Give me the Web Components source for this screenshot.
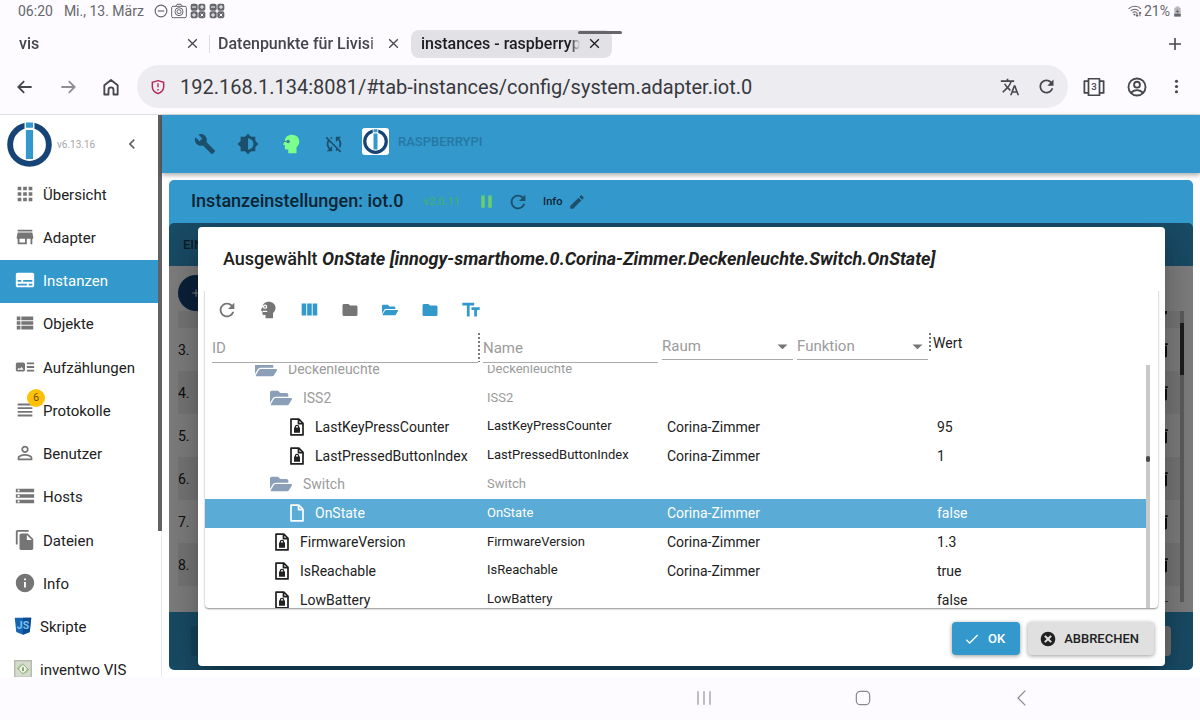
<!DOCTYPE html>
<html lang="de">
<head>
<meta charset="utf-8">
<title>instances - raspberrypi</title>
<style>
    :root {
        --chrome-bg: #fdfbff;
        --chrome-fg: #45474d;
        --primary: #3399cc;
        --primary-dark: #164477;
        --text: #212121;
        --muted: #9b9b9b;
        --icon: #757575;
    }

    html,
    body {
        height: 100%;
    }

    body {
        margin: 0;
        display: flex;
        flex-direction: column;
        overflow: hidden;
        background: var(--chrome-bg);
        color: var(--text);
        font-family: Roboto, "Liberation Sans", sans-serif;
        font-size: 14px;
    }

    .page {
        flex: 1;
        min-height: 0;
        display: flex;
        background: #fff;
        border-top: 1px solid #dedde2;
        box-sizing: border-box;
    }

    main {
        flex: 1;
        min-width: 0;
        display: flex;
        flex-direction: column;
        gap: 7px;
    }
</style>
</head>
<body>

<status-bar></status-bar>
<tab-strip>
    <browser-tab>vis</browser-tab>
    <browser-tab divider>Datenpunkte für Livisi</browser-tab>
    <browser-tab active>instances - raspberrypi</browser-tab>
</tab-strip>
<address-bar url="192.168.1.134:8081/#tab-instances/config/system.adapter.iot.0"></address-bar>

<div class="page">
    <side-nav version="v6.13.16">
        <nav-item icon="apps">Übersicht</nav-item>
        <nav-item icon="store">Adapter</nav-item>
        <nav-item icon="subtitles" selected>Instanzen</nav-item>
        <nav-item icon="list">Objekte</nav-item>
        <nav-item icon="art">Aufzählungen</nav-item>
        <nav-item icon="headline" badge="6">Protokolle</nav-item>
        <nav-item icon="person">Benutzer</nav-item>
        <nav-item icon="storage">Hosts</nav-item>
        <nav-item icon="copy">Dateien</nav-item>
        <nav-item icon="info">Info</nav-item>
        <nav-item icon="js" image>Skripte</nav-item>
        <nav-item icon="inventwo" image>inventwo VIS</nav-item>
    </side-nav>
    <main>
        <admin-header>RASPBERRYPI</admin-header>
        <instance-panel name="iot.0" version="v2.0.11">
            <select-dialog state="OnState" path="innogy-smarthome.0.Corina-Zimmer.Deckenleuchte.Switch.OnState">
                <tree-row level="0" kind="folder" name="Deckenleuchte"></tree-row>
                <tree-row level="1" kind="folder" name="ISS2"></tree-row>
                <tree-row level="2" kind="locked" name="LastKeyPressCounter" room="Corina-Zimmer" value="95"></tree-row>
                <tree-row level="2" kind="locked" name="LastPressedButtonIndex" room="Corina-Zimmer" value="1"></tree-row>
                <tree-row level="1" kind="folder" name="Switch"></tree-row>
                <tree-row level="2" kind="file" name="OnState" room="Corina-Zimmer" value="false" selected></tree-row>
                <tree-row level="1" kind="locked" name="FirmwareVersion" room="Corina-Zimmer" value="1.3"></tree-row>
                <tree-row level="1" kind="locked" name="IsReachable" room="Corina-Zimmer" value="true"></tree-row>
                <tree-row level="1" kind="locked" name="LowBattery" value="false"></tree-row>
            </select-dialog>
        </instance-panel>
    </main>
</div>

<system-nav></system-nav>

<script type="module">
    const HEAD = '<path fill-rule="evenodd" d="M13 2C8.6 2 5.6 4.500 5.300 8.400L3.500 12.200c-.2.5 0 .8.500.8H5.300v3.500c0 1 .7 1.500 1.500 1.500H9v4h9v-6.500c1.900-1.600 3-3.900 3-6.300C21 5 17.500 2 13 2z"/>';

    // markup on a 24 grid, or [viewBox, markup]
    const ICONS = {
        wrench: '<path d="M22.700 19l-9.100-9.100c.9-2.300.4-5-1.500-6.900-2-2-5-2.400-7.400-1.300L9 6 6 9 1.600 4.700C.4 7.100.9 10.100 2.900 12.100c1.900 1.900 4.600 2.400 6.900 1.500l9.100 9.100c.4.4 1 .4 1.400 0l2.300-2.300c.5-.4.5-1.100.1-1.400z"/>',
        brightness: '<path d="M20 15.310L23.310 12 20 8.690V4h-4.690L12 .69 8.690 4H4v4.690L.69 12 4 15.310V20h4.690L12 23.310 15.310 20H20v-4.690zM12 18V6c3.310 0 6 2.690 6 6s-2.690 6-6 6z"/>',
        syncOff: '<path d="M10 6.350V4.260c-.8.21-1.550.54-2.230.96l1.460 1.460c.25-.12.5-.24.77-.33zm-7.140-.94l2.360 2.360C4.450 8.990 4 10.440 4 12c0 2.210.91 4.200 2.360 5.640L4 20h6v-6l-2.240 2.240C6.680 15.150 6 13.660 6 12c0-1 .25-1.940.68-2.770l8.080 8.080c-.25.13-.5.25-.77.34v2.090c.8-.21 1.550-.54 2.230-.96l2.360 2.360 1.270-1.270L4.140 4.140 2.860 5.410zM20 4h-6v6l2.240-2.240C17.320 8.850 18 10.340 18 12c0 1-.25 1.940-.68 2.770l1.460 1.460C19.550 15.010 20 13.560 20 12c0-2.210-.91-4.200-2.360-5.640L20 4z"/>',
        head: HEAD + '<circle cx="8.800" cy="9.200" r="1.900" fill="#3a7d9c"/><path stroke="#3a7d9c" stroke-width="1" d="M3 9.200h4"/>',
        expert: HEAD + '<circle cx="8.500" cy="8" r="2.600" fill="#fff"/><circle cx="8.500" cy="8" r="1.100"/><path stroke="#fff" stroke-width="1.500" d="M3 8h4M6 13.500h5"/>',
        refresh: '<path d="M17.650 6.350C16.200 4.900 14.210 4 12 4c-4.420 0-7.990 3.580-7.990 8s3.570 8 7.990 8c3.730 0 6.840-2.550 7.730-6h-2.080c-.82 2.330-3.040 4-5.650 4-3.310 0-6-2.690-6-6s2.690-6 6-6c1.660 0 3.140.69 4.220 1.780L13 11h7V4l-2.350 2.350z"/>',
        pause: '<path d="M6 19h4V5H6v14zm8-14v14h4V5h-4z"/>',
        edit: '<path d="M3 17.250V21h3.750L17.810 9.940l-3.750-3.750L3 17.250zM20.710 7.040c.39-.39.39-1.020 0-1.410l-2.340-2.340c-.39-.39-1.020-.39-1.410 0l-1.830 1.830 3.750 3.750 1.830-1.830z"/>',
        apps: '<path d="M4 8h4V4H4v4zm6 12h4v-4h-4v4zm-6 0h4v-4H4v4zm0-6h4v-4H4v4zm6 0h4v-4h-4v4zm6-10v4h4V4h-4zm-6 4h4V4h-4v4zm6 6h4v-4h-4v4zm0 6h4v-4h-4v4z"/>',
        store: '<path d="M20 4H4v2h16V4zm1 10v-2l-1-5H4l-1 5v2h1v6h10v-6h4v6h2v-6h1zm-9 4H6v-4h6v4z"/>',
        subtitles: '<path d="M20 4H4c-1.100 0-2 .9-2 2v12c0 1.100.9 2 2 2h16c1.100 0 2-.9 2-2V6c0-1.100-.9-2-2-2zM4 12h4v2H4v-2zm10 6H4v-2h10v2zm6 0h-4v-2h4v2zm0-4H10v-2h10v2z"/>',
        list: '<path d="M3 14h4v-4H3v4zm0 5h4v-4H3v4zM3 9h4V5H3v4zm5 5h13v-4H8v4zm0 5h13v-4H8v4zM8 5v4h13V5H8z"/>',
        art: '<path d="M22 13h-8v-2h8v2zm0-6h-8v2h8V7zm-8 10h8v-2h-8v2zm-2-8v6c0 1.100-.9 2-2 2H4c-1.100 0-2-.9-2-2V9c0-1.100.9-2 2-2h6c1.100 0 2 .9 2 2zm-1.500 6l-2.250-3-1.750 2.260-1.250-1.510L3.500 15h7z"/>',
        headline: '<path d="M4 15h16v-2H4v2zm0 4h16v-2H4v2zm0-8h16V9H4v2zm0-6v2h16V5H4z"/>',
        person: '<path d="M12 5.900c1.160 0 2.100.94 2.100 2.100s-.94 2.100-2.100 2.100S9.900 9.160 9.900 8s.94-2.100 2.100-2.100m0 9c2.970 0 6.100 1.460 6.100 2.100v1.100H5.900V17c0-.64 3.130-2.100 6.100-2.100M12 4C9.790 4 8 5.790 8 8s1.790 4 4 4 4-1.790 4-4-1.790-4-4-4zm0 9c-2.670 0-8 1.340-8 4v3h16v-3c0-2.660-5.330-4-8-4z"/>',
        storage: '<path d="M2 20h20v-4H2v4zm2-3h2v2H4v-2zM2 4v4h20V4H2zm4 3H4V5h2v2zm-4 7h20v-4H2v4zm2-3h2v2H4v-2z"/>',
        copy: '<path d="M16 1H4c-1.100 0-2 .9-2 2v14h2V3h12V1zm-1 4l6 6v10c0 1.100-.9 2-2 2H7.990C6.890 23 6 22.100 6 21l.01-14c0-1.100.89-2 1.990-2h7zm-1 7h5.500L14 6.500V12z"/>',
        info: '<path d="M12 2C6.480 2 2 6.480 2 12s4.480 10 10 10 10-4.480 10-10S17.520 2 12 2zm1 15h-2v-6h2v6zm0-8h-2V7h2v2z"/>',
        columns: '<path d="M10 18h5V5h-5v13zm-6 0h5V5H4v13zM16 5v13h5V5h-5z"/>',
        folder: '<path d="M10 4H4c-1.100 0-1.990.9-1.990 2L2 18c0 1.100.9 2 2 2h16c1.100 0 2-.9 2-2V8c0-1.100-.9-2-2-2h-8l-2-2z"/>',
        folderOpen: ["0 0 576 512", '<path d="M572.694 292.093L500.270 416.248A64 64 0 0 1 444.989 448H45.025c-18.523 0-30.064-20.093-20.731-36.093l72.424-124.155A64 64 0 0 1 152 256h399.964c18.523 0 30.064 20.093 20.730 36.093zM152 224h328v-48c0-26.510-21.490-48-48-48H272l-64-64H48C21.490 64 0 85.490 0 112v278.046l69.077-118.418C86.214 242.250 117.989 224 152 224z"/>'],
        textSize: '<path d="M2.500 4v3h5v12h3V7h5V4h-13zm19 5h-9v3h3v7h3v-7h3V9z"/>',
        file: '<path fill="none" stroke="currentColor" stroke-width="2.200" stroke-linejoin="round" d="M4 1.500h10.500L20 7v15.500H4zM14 2v5.500h5.500"/>',
        locked: '<path fill="none" stroke="currentColor" stroke-width="2.300" stroke-linejoin="round" d="M4 1.500h10.500L20 7v15.500H4zM14 2v5.500h5.500"/><path fill-rule="evenodd" d="M8 12.700h1V12a3 3 0 0 1 6 0v.7h1v6.800H8zM10.600 12.700h2.800V12a1.400 1.400 0 0 0-2.800 0z"/>',
        check: '<path fill="none" stroke="currentColor" stroke-width="2" d="M3.500 13l5 5L20.500 6"/>',
        cancel: '<path fill-rule="evenodd" d="M12 1a11 11 0 1 0 0 22 11 11 0 0 0 0-22zM8.300 6.200L12 9.900l3.700-3.700 2.100 2.100L14.100 12l3.700 3.700-2.100 2.100L12 14.100l-3.700 3.700-2.100-2.100L9.900 12 6.200 8.300z"/>',
        trash: '<path d="M6 19c0 1.100.9 2 2 2h8c1.100 0 2-.9 2-2V7H6v12zM19 4h-3.500l-1-1h-5l-1 1H5v2h14V4z"/>',
        chevron: '<path d="M15.410 7.410L14 6l-6 6 6 6 1.410-1.410L10.830 12z"/>',
        caret: '<path d="M5 9l7 7 7-7z"/>',
        close: '<path fill="none" stroke="currentColor" stroke-width="2.400" d="M4 4l16 16M20 4L4 20"/>',
        plus: '<path fill="none" stroke="currentColor" stroke-width="2.400" d="M12 3v18M3 12h18"/>',
        back: '<path fill="none" stroke="currentColor" stroke-width="2.200" d="M20 12H4M11 5l-7 7 7 7"/>',
        forward: '<path fill="none" stroke="currentColor" stroke-width="2.200" d="M4 12h16M13 5l7 7-7 7"/>',
        home: '<path fill="none" stroke="currentColor" stroke-width="2.200" stroke-linejoin="round" d="M4 10l8-6.500L20 10v11h-5v-5.500a3 3 0 0 0-6 0V21H4z"/>',
        shield: '<path fill="none" stroke="#b3265b" stroke-width="2.200" d="M12 2.500L20.500 5v7c0 5-3.500 8-8.500 10-5-2-8.500-5-8.500-10V5z"/><path stroke="#b3265b" stroke-width="2" d="M12 6.500v6M12 15v2.200"/>',
        translate: '<path d="M12.870 15.070l-2.540-2.510.03-.03c1.740-1.940 2.980-4.170 3.710-6.530H17V4h-7V2H8v2H1v1.990h11.170C11.500 7.920 10.440 9.750 9 11.350 8.070 10.320 7.300 9.190 6.690 8h-2c.73 1.630 1.730 3.170 2.980 4.560l-5.090 5.020L4 19l5-5 3.110 3.110.76-2.040zM18.500 10h-2L12 22h2l1.120-3h4.750L21 22h2l-4.500-12zm-2.620 7l1.620-4.330L19.120 17h-3.240z"/>',
        tabs: '<path fill="none" stroke="currentColor" stroke-width="1.900" stroke-linejoin="round" d="M6 3h12v18H6zM6 5.500H1.500v13H6M18 5.500h4.500v13H18"/><text x="12" y="15.800" font-size="10.500" font-weight="500" text-anchor="middle">3</text>',
        account: '<g fill="none" stroke="currentColor" stroke-width="2"><circle cx="12" cy="12" r="9.300"/><circle cx="12" cy="9.500" r="3.200"/><path d="M5.500 18.500c3.500-4.200 9.500-4.200 13 0"/></g>',
        more: '<circle cx="12" cy="4.500" r="2.200"/><circle cx="12" cy="12" r="2.200"/><circle cx="12" cy="19.500" r="2.200"/>',
        dnd: '<g fill="none" stroke="currentColor" stroke-width="2"><circle cx="12" cy="12" r="10"/><path d="M6.500 12h11"/></g>',
        camera: '<g fill="none" stroke="currentColor" stroke-width="1.500"><rect x="1" y="5" width="22" height="17" rx="2"/><path d="M7 5l2-3h6l2 3"/><circle cx="12" cy="13" r="6"/><circle cx="12" cy="13" r="3"/></g>',
        calc: '<g><rect x="1" y="1" width="10.500" height="10.500" rx="3"/><rect x="12.500" y="1" width="10.500" height="10.500" rx="3"/><rect x="1" y="12.500" width="10.500" height="10.500" rx="3"/><rect x="12.500" y="12.500" width="10.500" height="10.500" rx="3"/></g><path stroke="#fdfbff" stroke-width="1.500" d="M3 6h6M18 3v6M15 6h6M6 15v6M3 18h6M16 16l4 4M20 16l-4 4"/>',
        wifi: '<g fill="none" stroke="currentColor" stroke-width="1.800"><path d="M1 8.500c6-6 16-6 21 0M4.500 12c4-4 10-4 14 0M8 15c2-2 5-2 7 0"/><path d="M15.500 15v6M13.500 19l2 2 2-2M20.500 21v-7M18.500 16l2-2 2 2"/></g><circle cx="11" cy="18" r="1.700"/>',
        battery: '<path d="M8 1h8v3h3v19H5V4h3z" opacity=".45"/><path d="M5 17h14v6H5zM13 6l-5 7h4l-1 5 5-7h-4z"/>',
        logo: ["0 0 100 100", '<circle cx="50" cy="50" r="43" fill="#fff" stroke="#164477" stroke-width="13"/><path fill="#fff" d="M39 0h22v20H39z"/><path fill="#3399cc" d="M42 1h16v12H42zM42 18h16v64H42z"/>'],
        js: '<path fill="#1565b0" d="M1 1h22l-2 19-9 3.500L3 20z"/><path fill="#0b4c96" d="M12 1h11l-2 19-9 3.500z"/><text x="12" y="16.500" font-size="14" font-weight="700" text-anchor="middle" fill="#7cc0ee">JS</text>',
        inventwo: '<rect width="24" height="24" fill="#b6bdb0"/><rect x="2" y="2" width="20" height="20" fill="#d5dccf"/><path fill="none" stroke="#8fb573" stroke-width="1.200" d="M12 5l6.500 7-6.500 7-6.500-7zM4 12l5-6M20 12l-5 6"/><circle cx="12" cy="12" r="4" fill="#f0f5ea"/><path stroke="#567a3c" stroke-width="1.800" d="M12 9.500v5"/>',
        recents: '<path fill="none" stroke="currentColor" stroke-width="1.600" d="M3 2v20M12 2v20M21 2v20"/>',
        homeKey: '<rect x="2" y="2" width="20" height="20" rx="6" fill="none" stroke="currentColor" stroke-width="1.800"/>',
        backKey: '<path fill="none" stroke="currentColor" stroke-width="1.800" d="M17 1L6 12l11 11"/>',
    };

    const RESET = `
        *, *::before, *::after { box-sizing: border-box; }
        :host { box-sizing: border-box; }
        button, a, input, select {
            margin: 0; padding: 0; border: 0; background: none;
            font: inherit; color: inherit; text-decoration: none; outline: 0;
        }
        button { display: flex; align-items: center; justify-content: center; cursor: pointer; }
    `;

    const define = (name, render) =>
        customElements.define(name, class extends HTMLElement {
            constructor() {
                super();
                this.attachShadow({ mode: "open" });
            }
            connectedCallback() {
                const tpl = document.createElement("template");
                tpl.innerHTML = `<style>${RESET}</style>` + render(this);
                this.shadowRoot.replaceChildren(tpl.content.cloneNode(true));
            }
        });

    define("ob-icon", (el) => {
        const icon = ICONS[el.getAttribute("name")];
        const [box, body] = Array.isArray(icon) ? icon : ["0 0 24 24", icon];
        const size = el.getAttribute("size") || 22;
        return `
            <style>
                :host { display: inline-flex; flex: none; width: ${size}px; height: ${size}px; }
                svg { width: 100%; height: 100%; display: block; overflow: visible; }
            </style>
            <svg viewBox="${box}" fill="currentColor" aria-hidden="true">${body}</svg>`;
    });

    define("status-bar", () => `
        <style>
            :host { display: flex; align-items: center; justify-content: space-between; height: 22px; padding: 0 17px 0 18px; color: #66676c; }
            .group { display: flex; align-items: center; gap: 3px; }
            .date { margin: 0 7px 0 8px; }
            .right { gap: 2px; }
        </style>
        <div class="group">
            <span>06:20</span><span class="date">Mi., 13. März</span>
            <ob-icon name="dnd" size="14"></ob-icon>
            <ob-icon name="camera" size="16"></ob-icon>
            <ob-icon name="calc" size="16"></ob-icon>
            <ob-icon name="calc" size="16"></ob-icon>
        </div>
        <div class="group right">
            <ob-icon name="wifi" size="14"></ob-icon>
            <span>21%</span>
            <ob-icon name="battery" size="11"></ob-icon>
        </div>`);

    define("tab-strip", () => `
        <style>
            :host { position: relative; display: flex; align-items: center; height: 43px; padding: 0 17px 0 9px; color: var(--chrome-fg); }
            .add { margin-left: auto; }
            .handle { position: absolute; left: 50%; top: 9px; width: 44px; height: 3px; margin-left: -22px; border-radius: 2px; background: #66656a; }
        </style>
        <slot></slot>
        <button class="add" aria-label="Neuer Tab"><ob-icon name="plus" size="16"></ob-icon></button>
        <div class="handle"></div>`);

    define("browser-tab", () => `
        <style>
            :host { display: flex; align-items: center; width: 201px; height: 28px; padding: 0 11px 0 10px; gap: 8px; }
            :host([active]) { background: #e2e1e6; border-radius: 8px; color: #1d1d21; }
            :host([divider])::before { content: ""; width: 1px; height: 18px; margin: 0 0 0 -11px; background: #dcdbe1; }
            .title {
                flex: 1; overflow: hidden; white-space: nowrap; justify-content: flex-start;
                font-size: 16px; font-weight: 500;
                mask-image: linear-gradient(90deg, #000 calc(100% - 10px), transparent);
            }
        </style>
        <button class="title" role="tab"><slot></slot></button>
        <button aria-label="Tab schließen"><ob-icon name="close" size="13"></ob-icon></button>`);

    define("address-bar", (el) => `
        <style>
            :host { display: flex; align-items: center; padding: 0 17px 6px 15px; color: var(--chrome-fg); }
            .nav { display: flex; gap: 23px; margin-right: 16px; }
            .forward { color: #8e8f95; }
            form { flex: 1; display: flex; align-items: center; height: 43px; padding: 0 11px 0 13px; border-radius: 22px; background: #edecf1; }
            input { flex: 1; min-width: 0; margin-left: 14px; font-size: 20px; color: #37393e; }
            form button + button { margin-left: 16px; }
            .tools { display: flex; gap: 21px; margin-left: 15px; }
            .menu { width: 14px; }
        </style>
        <div class="nav">
            <button aria-label="Zurück"><ob-icon name="back" size="20"></ob-icon></button>
            <button class="forward" aria-label="Vorwärts"><ob-icon name="forward" size="20"></ob-icon></button>
            <button aria-label="Startseite"><ob-icon name="home" size="20"></ob-icon></button>
        </div>
        <form>
            <ob-icon name="shield" size="16"></ob-icon>
            <input type="text" aria-label="Adresse" value="${el.getAttribute("url")}">
            <button type="button" aria-label="Übersetzen"><ob-icon name="translate" size="20"></ob-icon></button>
            <button type="button" aria-label="Neu laden"><ob-icon name="refresh" size="21"></ob-icon></button>
        </form>
        <div class="tools">
            <button aria-label="Tabs"><ob-icon name="tabs" size="22"></ob-icon></button>
            <button aria-label="Konto"><ob-icon name="account" size="22"></ob-icon></button>
            <button class="menu" aria-label="Menü"><ob-icon name="more" size="17"></ob-icon></button>
        </div>`);

    define("side-nav", (el) => `
        <style>
            :host { display: flex; width: 162px; overflow: hidden; }
            nav { flex: 1; }
            header { display: flex; align-items: center; height: 58px; padding: 0 16px 0 7px; gap: 5px; font-size: 10px; color: #a8a8a8; }
            .fold { margin-left: auto; color: #616161; }
            .items { display: grid; grid-template-rows: repeat(12, 1fr); height: 519px; }
            .scroll { width: 4px; border-right: 1px solid #e8e8ea; }
            .scroll div { width: 4px; height: 74%; background: #616163; }
        </style>
        <nav>
            <header>
                <ob-icon name="logo" size="45"></ob-icon>
                <span>${el.getAttribute("version")}</span>
                <button class="fold" aria-label="Menü einklappen"><ob-icon name="chevron" size="20"></ob-icon></button>
            </header>
            <div class="items"><slot></slot></div>
        </nav>
        <div class="scroll"><div></div></div>`);

    define("nav-item", (el) => {
        const badge = el.getAttribute("badge");
        return `
        <style>
            :host { display: block; font-size: 15px; }
            a { position: relative; display: flex; align-items: center; height: 100%; padding-left: 14px; gap: 7px; }
            ob-icon { color: var(--icon); margin-bottom: 2px; }
            :host([image]) a { gap: 8px; }
            :host([selected]) { background: var(--primary); color: #fff; }
            :host([selected]) ob-icon { color: #fff; }
            .badge {
                position: absolute; left: 27px; top: 0; width: 18px; height: 18px;
                border-radius: 50%; background: #ffc107; color: #6a5106;
                font-size: 11px; line-height: 18px; text-align: center;
            }
        </style>
        <a href="#">
            <ob-icon name="${el.getAttribute("icon")}" size="${el.hasAttribute("image") ? 18 : 22}"></ob-icon>
            <span><slot></slot></span>
            ${badge ? `<span class="badge">${badge}</span>` : ""}
        </a>`;
    });

    define("admin-header", () => `
        <style>
            :host {
                display: flex; align-items: center; height: 58px; padding-left: 32px; gap: 21px;
                background: var(--primary); color: #1b4f6c; box-shadow: 0 2px 5px rgba(0, 0, 0, .35);
            }
            .expert { color: #7dff8c; }
            .host { gap: 9px; padding-bottom: 5px; margin-left: -4px; font-size: 13px; font-weight: 500; color: #2677a3; }
            .logo { display: flex; padding: 1px; border-radius: 3px; background: #fff; }
        </style>
        <button aria-label="Einstellungen"><ob-icon name="wrench" size="22"></ob-icon></button>
        <button aria-label="Thema"><ob-icon name="brightness" size="22"></ob-icon></button>
        <button class="expert" aria-label="Expertenmodus"><ob-icon name="head" size="22"></ob-icon></button>
        <button aria-label="Synchronisierung"><ob-icon name="syncOff" size="22"></ob-icon></button>
        <button class="host"><span class="logo"><ob-icon name="logo" size="25"></ob-icon></span><slot></slot></button>`);

    define("instance-panel", (el) => {
        // the first and the last row are scrolled out except for their edge
        const rows = ["", "3.", "4.", "5.", "6.", "7.", "8.", ""]
            .map((n) => `<li><span>${n}</span><ob-icon name="trash" size="20"></ob-icon></li>`)
            .join("");
        return `
        <style>
            :host {
                position: relative; flex: 1; min-height: 0; display: flex; flex-direction: column;
                margin: 0 7px; margin-bottom: 7px; border-radius: 5px; overflow: hidden; background: #fff;
            }
            header { flex: none; display: flex; align-items: center; height: 43px; padding-left: 22px; gap: 10px; background: var(--primary); color: #1b4f6c; }
            h2 { margin: 0 10px 2px 0; font-size: 18px; font-weight: 500; color: #0b2433; }
            .version { margin-right: 6px; font-size: 11px; font-weight: 500; color: #40ae7c; }
            .pause { color: #68cf6c; }
            .info { gap: 6px; margin-left: 4px; font-size: 11px; font-weight: 500; color: #0b2433; }
            .info ob-icon { color: #1b4f6c; }
            .tabs { flex: none; display: flex; align-items: center; height: 43px; padding: 0 14px; background: var(--primary); font-size: 13px; font-weight: 500; color: #1d3a4d; }
            .actions { flex: none; display: flex; align-items: flex-end; height: 45px; padding-left: 9px; }
            .add { width: 36px; height: 36px; border-radius: 50%; background: var(--primary-dark); color: #fff; }
            .rows { flex: 1; min-height: 0; display: flex; margin: 0 9px 10px; overflow: hidden; }
            ul { flex: 1; margin: -26px 0 0; padding: 0; list-style: none; font-size: 14px; }
            li { display: flex; align-items: center; justify-content: space-between; height: 43px; padding-right: 8px; }
            li:nth-child(odd) { background: #eee; }
            .scroll { width: 4px; padding-top: 12px; background: #bdbdbd; }
            .scroll div { height: 52px; background: #3c3c3c; }
            footer { flex: none; display: flex; align-items: center; justify-content: space-between; height: 58px; padding: 0 22px; background: var(--primary); }
            footer button { width: 80px; height: 30px; border-radius: 4px; background: #2c87b5; }
            footer button:last-child { background: #e0e0e0; }
            .backdrop { position: absolute; inset: 43px 0 0; display: flex; padding: 4px 28px 4px 29px; background: rgba(0, 0, 0, .5); border-radius: 5px; overflow: hidden; }
        </style>
        <header>
            <h2>Instanzeinstellungen: ${el.getAttribute("name")}</h2>
            <span class="version">${el.getAttribute("version")}</span>
            <button class="pause" aria-label="Anhalten"><ob-icon name="pause" size="21"></ob-icon></button>
            <button aria-label="Neu starten"><ob-icon name="refresh" size="22"></ob-icon></button>
            <button class="info">Info <ob-icon name="edit" size="18"></ob-icon></button>
        </header>
        <div class="tabs">EINSTELLUNGEN</div>
        <div class="actions"><button class="add" aria-label="Hinzufügen"><ob-icon name="plus" size="10"></ob-icon></button></div>
        <div class="rows"><ul>${rows}</ul><div class="scroll"><div></div></div></div>
        <footer><button aria-label="Speichern"></button><button aria-label="Schließen"></button></footer>
        <div class="backdrop"><slot></slot></div>`;
    });

    define("filter-field", (el) => {
        const label = el.getAttribute("label");
        return `
        <style>
            :host { display: block; color: var(--muted); font-size: 15px; }
            label { display: flex; align-items: center; height: 30px; border-bottom: 1px solid #aaa; }
            :host([select]) label { height: 27px; }
            input, select { flex: 1; min-width: 0; width: 100%; height: 100%; appearance: none; }
            input::placeholder { color: var(--muted); opacity: 1; }
            ob-icon { margin: 0 2px 0 -18px; pointer-events: none; color: var(--icon); }
        </style>
        <label>${el.hasAttribute("select")
            ? `<select aria-label="${label}"><option>${label}</option></select><ob-icon name="caret" size="17"></ob-icon>`
            : `<input type="text" aria-label="${label}" placeholder="${label}">`}</label>`;
    });

    define("tree-row", (el) => {
        const { name, room = "", value = "", kind, level } = Object.fromEntries([...el.attributes].map((a) => [a.name, a.value]));
        const folder = kind === "folder";
        // leafs sit a bit further in than the folders of the same level
        const indent = 50 + level * 15 + (folder ? 0 : 3);
        return `
        <style>
            :host { display: grid; grid-template-columns: var(--tree-columns); align-items: center; white-space: nowrap; font-size: 14px; }
            .id { display: flex; align-items: center; padding-left: ${indent}px; gap: ${folder ? 11 : 9}px; }
            .name { font-size: 13px; padding-bottom: 2px; }
            :host([kind="folder"]) { color: var(--muted); }
            :host([kind="folder"]) ob-icon { color: #8c9fb8; }
            :host([selected]) { background: #5aabd6; color: #fff; }
        </style>
        <span class="id"><ob-icon name="${folder ? "folderOpen" : kind}" size="${folder ? 22 : 18}"></ob-icon>${name}</span>
        <span class="name">${name}</span>
        <span>${room}</span>
        <span></span>
        <span>${value}</span>`;
    });

    define("md-button", (el) => `
        <style>
            :host { display: block; }
            button {
                height: 33px; padding: 0 15px 0 12px; gap: 8px; border-radius: 4px;
                background: #e0e0e0; font-size: 13px; font-weight: 500; line-height: 20px;
                box-shadow: 0 1px 4px rgba(0, 0, 0, .4);
            }
            :host([primary]) button { background: var(--primary); color: #fff; }
        </style>
        <button type="button"><ob-icon name="${el.getAttribute("icon")}" size="16"></ob-icon><slot></slot></button>`);

    define("select-dialog", (el) => `
        <style>
            :host {
                --tree-columns: 282px 180px 135px 135px 1fr;
                flex: 1; min-width: 0; display: flex; flex-direction: column;
                padding: 0 7px; border-radius: 4px; background: #fff;
                box-shadow: 0 11px 15px -7px rgba(0, 0, 0, .2), 0 24px 38px 3px rgba(0, 0, 0, .14), 0 9px 46px 8px rgba(0, 0, 0, .12);
            }
            h3 { flex: none; margin: 0; padding: 0 18px; height: 56px; line-height: 63px; font-size: 18px; font-weight: 500; white-space: nowrap; }
            em { font-weight: 700; }
            .paper { flex: 1; min-height: 0; display: flex; flex-direction: column; border-radius: 4px; overflow: hidden; box-shadow: 0 1px 2px rgba(0, 0, 0, .45); clip-path: inset(8px -2px -3px -2px); }
            .toolbar { flex: none; display: flex; align-items: center; height: 50px; padding: 4px 0 0 11px; gap: 20px; color: var(--primary); }
            .toolbar button { min-width: 20px; }
            .toolbar .grey { color: var(--icon); }
            .filters { flex: none; display: grid; grid-template-columns: 266px 5px 175px 270px 1fr; align-items: start; height: 32px; padding-left: 7px; }
            .sep { width: 2px; height: 29px; background: repeating-linear-gradient(#777 0 2px, transparent 2px 4px); }
            .selects { display: grid; grid-template-columns: 1fr 1fr; gap: 4px; padding-left: 4px; }
            .value { display: flex; gap: 2px; padding-left: 1px; }
            .value .sep { height: 18px; }
            .value span { padding-top: 2px; }
            .body { flex: 1; min-height: 0; display: flex; overflow: hidden; }
            .tree { flex: 1; display: grid; grid-template-rows: repeat(9, 1fr); height: 259px; margin-top: -10px; }
            .scroll { width: 4px; margin-right: 8px; padding-top: 91px; background: #c9c9c9; }
            .scroll div { height: 6px; border-radius: 2px; background: #444; }
            footer { flex: none; display: flex; justify-content: flex-end; align-items: center; height: 58px; padding: 3px 4px 0; gap: 8px; }
        </style>
        <h3>Ausgewählt <em>${el.getAttribute("state")} [${el.getAttribute("path")}]</em></h3>
        <div class="paper">
            <div class="toolbar">
                <button class="grey" aria-label="Aktualisieren"><ob-icon name="refresh" size="22"></ob-icon></button>
                <button class="grey" aria-label="Expertenmodus"><ob-icon name="expert" size="20"></ob-icon></button>
                <button aria-label="Spalten"><ob-icon name="columns" size="22"></ob-icon></button>
                <button class="grey" aria-label="Alle zuklappen"><ob-icon name="folder" size="18"></ob-icon></button>
                <button aria-label="Alle aufklappen"><ob-icon name="folderOpen" size="16"></ob-icon></button>
                <button aria-label="Eine Ebene zuklappen"><ob-icon name="folder" size="18"></ob-icon></button>
                <button aria-label="Beschreibungen"><ob-icon name="textSize" size="22"></ob-icon></button>
            </div>
            <div class="filters">
                <filter-field label="ID"></filter-field>
                <div class="sep"></div>
                <filter-field label="Name"></filter-field>
                <div class="selects">
                    <filter-field label="Raum" select></filter-field>
                    <filter-field label="Funktion" select></filter-field>
                </div>
                <div class="value"><div class="sep"></div><span>Wert</span></div>
            </div>
            <div class="body">
                <div class="tree"><slot></slot></div>
                <div class="scroll"><div></div></div>
            </div>
        </div>
        <footer>
            <md-button primary icon="check">OK</md-button>
            <md-button icon="cancel">ABBRECHEN</md-button>
        </footer>`);

    define("system-nav", () => `
        <style>
            :host { display: flex; align-items: center; justify-content: flex-end; height: 43px; padding: 0 170px 2px 0; gap: 143px; color: #88878d; }
        </style>
        <button aria-label="Letzte Apps"><ob-icon name="recents" size="16"></ob-icon></button>
        <button aria-label="Startbildschirm"><ob-icon name="homeKey" size="16"></ob-icon></button>
        <button aria-label="Zurück"><ob-icon name="backKey" size="16"></ob-icon></button>`);
</script>
</body>
</html>
